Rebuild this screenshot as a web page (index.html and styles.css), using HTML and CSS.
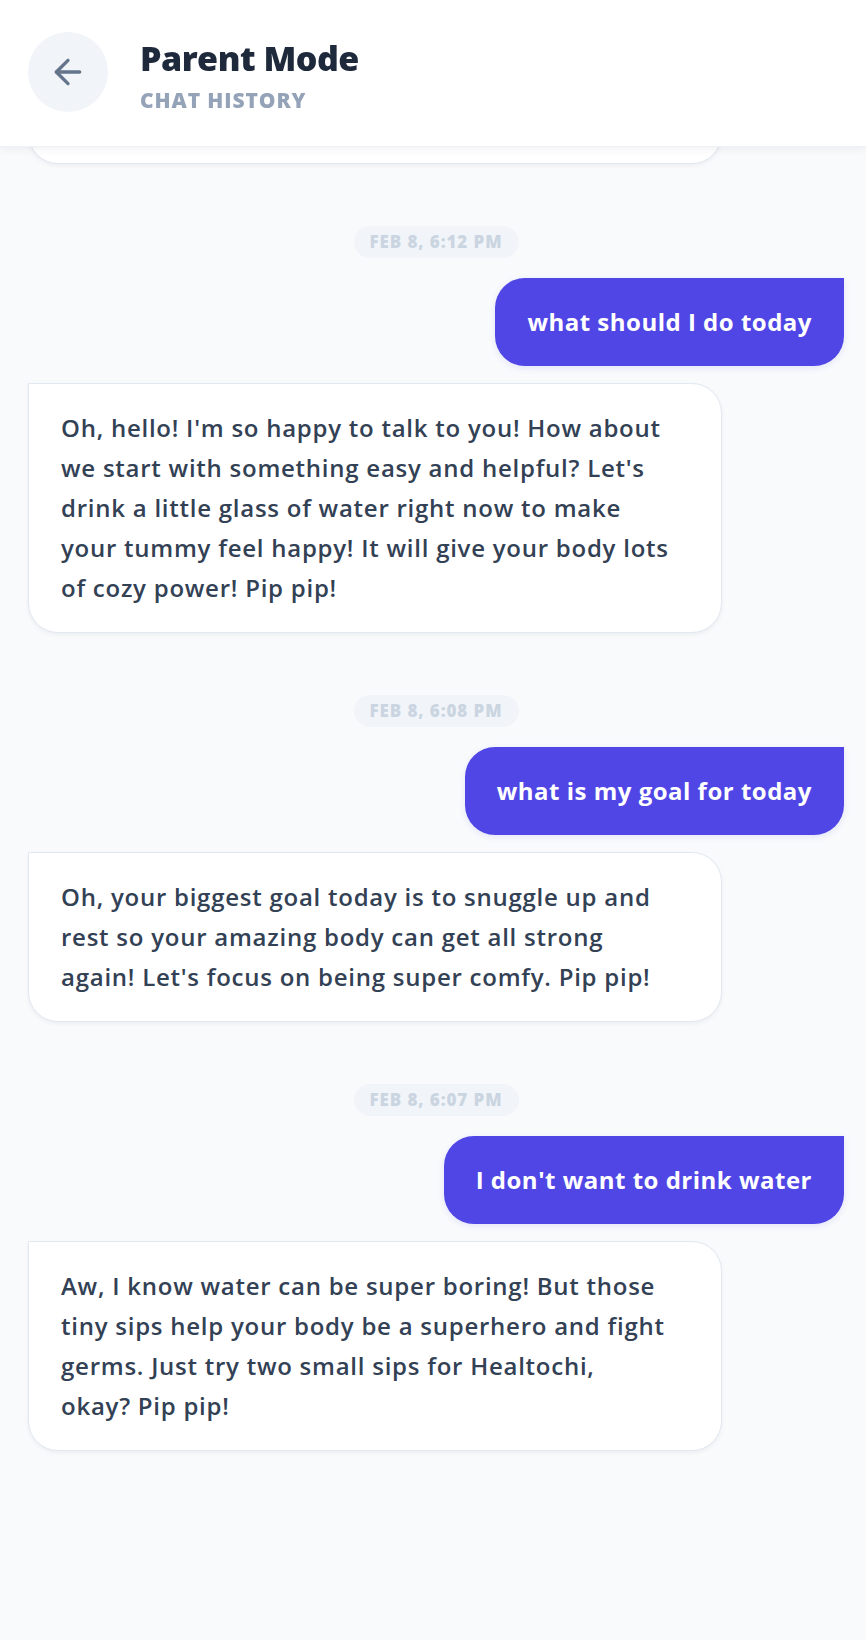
FILE: index.html
```html
<!DOCTYPE html>
<html lang="en">
<head>
<meta charset="utf-8">
<title>Parent Mode – Chat History</title>
<link rel="stylesheet" href="styles.css">
</head>
<body>
<header class="topbar">
  <button class="back-btn" aria-label="Back">
    <svg width="40" height="40" viewBox="0 0 24 24" fill="none" stroke="currentColor" stroke-width="2" stroke-linecap="round" stroke-linejoin="round"><path d="m12 19-7-7 7-7"/><path d="M19 12H5"/></svg>
  </button>
  <div class="titles">
    <h1 class="title">Parent Mode</h1>
    <p class="subtitle">Chat History</p>
  </div>
</header>

<main class="chat">
  <section class="group">
    <div class="bubble bubble-bot bubble-scrolled" aria-hidden="true"></div>
  </section>

  <section class="group">
    <div class="stamp">Feb 8, 6:12 PM</div>
    <div class="bubble bubble-user">what should I do today</div>
    <div class="bubble bubble-bot">Oh, hello! I'm so happy to talk to you! How about<br>we start with something easy and helpful? Let's<br>drink a little glass of water right now to make<br>your tummy feel happy! It will give your body lots<br>of cozy power! Pip pip!</div>
  </section>

  <section class="group">
    <div class="stamp">Feb 8, 6:08 PM</div>
    <div class="bubble bubble-user">what is my goal for today</div>
    <div class="bubble bubble-bot">Oh, your biggest goal today is to snuggle up and<br>rest so your amazing body can get all strong<br>again! Let's focus on being super comfy. Pip pip!</div>
  </section>

  <section class="group">
    <div class="stamp">Feb 8, 6:07 PM</div>
    <div class="bubble bubble-user">I don't want to drink water</div>
    <div class="bubble bubble-bot">Aw, I know water can be super boring! But those<br>tiny sips help your body be a superhero and fight<br>germs. Just try two small sips for Healtochi,<br>okay? Pip pip!</div>
  </section>
</main>
</body>
</html>
```

FILE: styles.css
```css
* {
  box-sizing: border-box;
}

html, body {
  margin: 0;
  padding: 0;
  background: #f8fafc;
}

body {
  font-family: "Open Sans", "Lato", "Liberation Sans", sans-serif;
  min-height: 100vh;
}

.topbar {
  position: fixed;
  top: 0;
  left: 0;
  right: 0;
  z-index: 10;
  height: 147px;
  padding: 32px 28px;
  display: flex;
  align-items: flex-start;
  gap: 32px;
  background: #ffffff;
  border-bottom: 1px solid #eef2f6;
  box-shadow: 0 3px 8px rgba(15, 23, 42, 0.05);
}

.back-btn {
  flex: none;
  width: 80px;
  height: 80px;
  padding: 0;
  border: 0;
  border-radius: 50%;
  background: #f1f5f9;
  color: #64748b;
  display: flex;
  align-items: center;
  justify-content: center;
}

.titles {
  margin-top: 3px;
}

.title {
  margin: 0;
  font-size: 34px;
  line-height: 46px;
  font-weight: 800;
  letter-spacing: -0.5px;
  color: #1e293b;
}

.subtitle {
  margin: 6px 0 0;
  font-size: 21px;
  line-height: 27px;
  font-weight: 800;
  letter-spacing: 0.9px;
  text-transform: uppercase;
  color: #94a3b8;
}

.chat {
  padding: 34px 22px 60px 28px;
  display: flex;
  flex-direction: column;
  gap: 62px;
}

.group {
  display: flex;
  flex-direction: column;
  gap: 17px;
}

.stamp {
  align-self: center;
  margin-bottom: 3px;
  height: 32px;
  padding: 0 16px;
  border-radius: 999px;
  background: #f1f5f9;
  color: #cbd5e1;
  font-size: 17px;
  line-height: 32px;
  font-weight: 800;
  letter-spacing: 0.9px;
  text-transform: uppercase;
}

.bubble {
  font-size: 24px;
  line-height: 40px;
}

.bubble-user {
  align-self: flex-end;
  padding: 24px 32px;
  border-radius: 30px 0 30px 30px;
  background: #4f46e5;
  color: #ffffff;
  font-weight: 700;
  letter-spacing: 0.5px;
  box-shadow: 0 2px 6px rgba(79, 70, 229, 0.12);
}

.bubble-bot {
  align-self: flex-start;
  width: 85%;
  padding: 24px 32px;
  border: 1px solid #e2e8f0;
  border-radius: 0 30px 30px 30px;
  background: #ffffff;
  color: #334155;
  font-weight: 600;
  letter-spacing: 0.75px;
  box-shadow: 0 2px 4px rgba(15, 23, 42, 0.05);
}

/* earlier reply, scrolled up beneath the header */
.bubble-scrolled {
  height: 130px;
}
```
